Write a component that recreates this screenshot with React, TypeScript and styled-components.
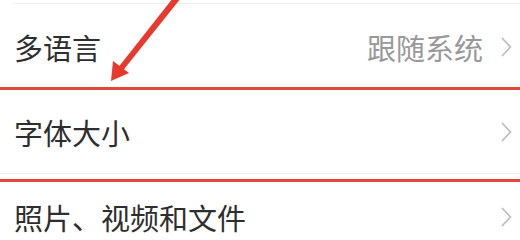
import styled, { createGlobalStyle } from "styled-components";

const GlobalStyle = createGlobalStyle`
  html, body {
    margin: 0;
    padding: 0;
    background: #ffffff;
  }
  body {
    font-family: "Noto Sans CJK SC", "Noto Sans", sans-serif;
    overflow: hidden;
  }
`;

const Page = styled.div`
  position: relative;
  width: 520px;
  height: 237px;
  overflow: hidden;
  padding-top: 3px;
  box-sizing: border-box;
  background: #ffffff;
`;

const List = styled.div`
  display: flex;
  flex-direction: column;
  border-top: 1px solid #efefef;
  margin-left: 13px;
`;

const Row = styled.div`
  display: flex;
  align-items: center;
  height: 85px;
  box-sizing: border-box;
  padding: 2px 8px 0 14px;
  margin-left: -13px;
  border-bottom: 1px solid #efefef;
`;

const Label = styled.span`
  flex: 1;
  font-size: 29px;
  color: #2e2e2e;
  white-space: nowrap;
`;

const Value = styled.span`
  font-size: 29px;
  color: #999999;
  margin-right: 18px;
  white-space: nowrap;
`;

const Chevron = styled.svg`
  width: 11px;
  height: 20px;
  flex-shrink: 0;
`;

const Highlight = styled.div`
  position: absolute;
  top: 87px;
  left: -4px;
  right: -4px;
  height: 95px;
  box-sizing: border-box;
  border: 3px solid #e2463f;
  pointer-events: none;
`;

const Arrow = styled.svg`
  position: absolute;
  top: 0;
  left: 0;
  width: 520px;
  height: 237px;
  pointer-events: none;
`;

const ChevronIcon = () => (
  <Chevron viewBox="0 0 11 20">
    <polyline
      points="1.5,1.5 9.5,10 1.5,18.5"
      fill="none"
      stroke="#bdbdbd"
      strokeWidth="1.8"
      strokeLinecap="round"
      strokeLinejoin="round"
    />
  </Chevron>
);

type Item = { label: string; value?: string };

const items: Item[] = [
  { label: "多语言", value: "跟随系统" },
  { label: "字体大小" },
  { label: "照片、视频和文件" },
];

export default function App() {
  return (
    <>
      <GlobalStyle />
      <Page>
        <List>
          {items.map((item) => (
            <Row key={item.label}>
              <Label>{item.label}</Label>
              {item.value && <Value>{item.value}</Value>}
              <ChevronIcon />
            </Row>
          ))}
        </List>
        <Highlight />
        <Arrow viewBox="0 0 520 237">
          <polygon points="173,-2 181,-2 121,73 117,69" fill="#e8392f" />
          <polygon points="111,81 113,61 129,73" fill="#e8392f" />
        </Arrow>
      </Page>
    </>
  );
}
